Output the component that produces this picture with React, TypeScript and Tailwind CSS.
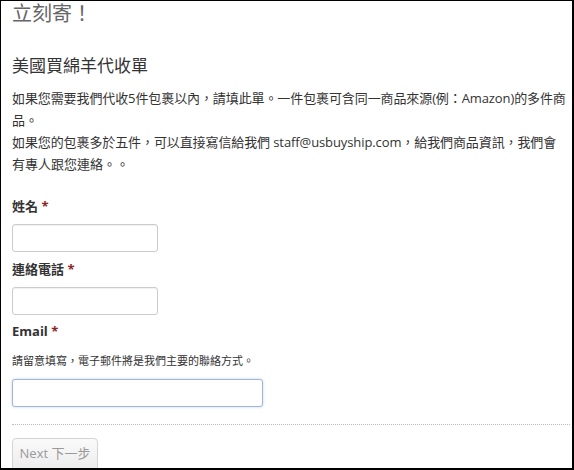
import React from 'react';

const font = { fontFamily: '"Open Sans", "Noto Sans CJK TC", sans-serif' };

const Label: React.FC<{ text: string; className?: string }> = ({ text, className = '' }) => (
  <div className={`text-[13px] font-bold leading-[20px] text-[#333] ${className}`}>
    {text} <span className="text-[#8b2323]">*</span>
  </div>
);

const Field: React.FC<{ width: string; focused?: boolean; className?: string }> = ({ width, focused, className = '' }) => (
  <input
    type="text"
    className={`block h-[28px] ${width} rounded-[3px] border bg-white px-2 text-[13px] outline-none ${
      focused
        ? 'border-[#9fb6d8] shadow-[0_0_3px_rgba(82,130,200,0.35)]'
        : 'border-[#ccc] shadow-[inset_0_1px_1px_rgba(0,0,0,0.06)]'
    } ${className}`}
  />
);

export default function App() {
  return (
    <div
      style={font}
      className="h-[470px] w-[574px] overflow-hidden border-t border-l border-r-2 border-b-2 border-black bg-white"
    >
      <div className="pl-[11px] pr-[2px]">
        <h1 className="text-[20px] font-normal leading-[26px] text-[#666]">立刻寄！</h1>

        <h2 className="mt-[27px] text-[17px] font-normal leading-[24px] text-[#333]">美國買綿羊代收單</h2>

        <div className="mt-[9px] text-[13px] leading-[22px] text-[#333]">
          <p className="whitespace-nowrap tracking-[-0.1px]">
            如果您需要我們代收5件包裹以內，請填此單。一件包裹可含同一商品來源(例：Amazon)的多件商
          </p>
          <p>品。</p>
          <p className="whitespace-nowrap tracking-[-0.1px]">
            如果您的包裹多於五件，可以直接寫信給我們 staff@usbuyship.com，給我們商品資訊，我們會
          </p>
          <p>有專人跟您連絡。。</p>
        </div>

        <Label text="姓名" className="mt-[21px]" />
        <Field width="w-[146px]" className="mt-[8px]" />

        <Label text="連絡電話" className="mt-[7px]" />
        <Field width="w-[146px]" className="mt-[8px]" />

        <Label text="Email" className="mt-[6px]" />
        <div className="mt-[12px] text-[11px] leading-[16px] text-[#333]">
          請留意填寫，電子郵件將是我們主要的聯絡方式。
        </div>
        <Field width="w-[251px]" focused className="mt-[10px]" />

        <div className="mt-[17px] border-t border-dotted border-[#bbb]" />

        <button
          type="button"
          disabled
          className="mt-[13px] h-[34px] w-[86px] rounded-[4px] border border-[#d4d4d4] bg-gradient-to-b from-[#fafafa] to-[#ececec] pb-[2px] text-[13px] text-[#999]"
        >
          Next 下一步
        </button>
      </div>
    </div>
  );
}
